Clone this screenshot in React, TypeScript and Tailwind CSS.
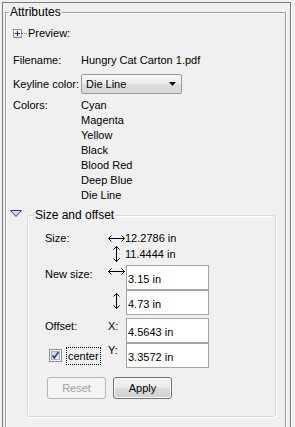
const colors = ["Cyan", "Magenta", "Yellow", "Black", "Blood Red", "Deep Blue", "Die Line"]

function HArrow() {
  return (
    <svg width="17" height="7" viewBox="0 0 17 7" className="block">
      <path d="M0.5 3.5H16.5M3.5 0.5L0.5 3.5L3.5 6.5M13.5 0.5L16.5 3.5L13.5 6.5" stroke="#000" fill="none" strokeWidth="1" />
    </svg>
  )
}

function VArrow() {
  return (
    <svg width="7" height="16" viewBox="0 0 7 16" className="block">
      <path d="M3.5 0.5V15.5M0.5 3.5L3.5 0.5L6.5 3.5M0.5 12.5L3.5 15.5L6.5 12.5" stroke="#000" fill="none" strokeWidth="1" />
    </svg>
  )
}

function TextBox({ value }: { value: string }) {
  return (
    <div className="w-[83px] h-[25px] bg-white border border-[#a5a5a5] pl-[1px] pt-[6px] leading-[14px]">
      {value}
    </div>
  )
}

export default function App() {
  return (
    <div className="w-[295px] h-[427px] overflow-hidden bg-[#f0f0f0] text-[11px] leading-[14px] text-black font-['Liberation_Sans',Arial,sans-serif]">
      <div className="ml-[2px] mt-[2px] w-[289px] h-[460px] border border-[#7c7c7c] shadow-[1px_0_0_#fff]">
        {/* Attributes group */}
        <div className="relative ml-[2px] mt-[9px] w-[281px] h-[440px] border border-[#a0a0a0] shadow-[inset_1px_1px_0_#fff,1px_1px_0_#fff]">
          <span className="absolute left-[3px] -top-[8px] px-[1px] bg-[#f0f0f0] text-[12px] leading-[14px]">Attributes</span>

          <div className="pl-[7px]">
            <div className="mt-[13px] h-[14px] flex items-center">
              <svg width="9" height="9" viewBox="0 0 9 9" className="block">
                <defs>
                  <linearGradient id="pb" x1="0" y1="0" x2="0" y2="1">
                    <stop offset="0" stopColor="#ffffff" />
                    <stop offset="1" stopColor="#dcdcdc" />
                  </linearGradient>
                </defs>
                <rect x="0.5" y="0.5" width="8" height="8" fill="url(#pb)" stroke="#919191" />
                <path d="M2 4.5H7M4.5 2V7" stroke="#1c2c6c" strokeWidth="1" />
              </svg>
              <svg width="6" height="1" viewBox="0 0 6 1" className="block">
                <path d="M0 0.5H6" stroke="#8a8a8a" strokeDasharray="1 1" />
              </svg>
              <span>Preview:</span>
            </div>

            <div className="mt-[13px] h-[14px] flex items-center">
              <span className="w-[68px]">Filename:</span>
              <span>Hungry Cat Carton 1.pdf</span>
            </div>

            <div className="mt-[7px] h-[20px] flex items-center">
              <span className="w-[68px]">Keyline color:</span>
              <div className="w-[101px] h-[20px] flex items-center justify-between rounded-[2px] border border-[#9a9a9a] bg-[linear-gradient(#f6f6f6,#ececec_50%,#e0e0e0_50%,#d6d6d6)] pl-[4px] pr-[5px]">
                <span>Die Line</span>
                <svg width="7" height="4" viewBox="0 0 7 4" className="block">
                  <path d="M0 0H7L3.5 4Z" fill="#000" />
                </svg>
              </div>
            </div>

            <div className="mt-[4px] flex">
              <span className="w-[68px] h-[15px] leading-[15px]">Colors:</span>
              <div className="flex flex-col">
                {colors.map((c) => (
                  <span key={c} className="h-[15px] leading-[15px]">
                    {c}
                  </span>
                ))}
              </div>
            </div>
          </div>

          {/* Size and offset */}
          <div className="mt-[7px] pl-[4px] flex items-start">
            <svg width="12" height="7" viewBox="0 0 12 7" className="block">
              <path d="M0.5 0.5H11.5L6 6.5Z" fill="#cfd0ee" stroke="#3b3f6a" strokeWidth="1" strokeLinejoin="round" />
            </svg>
            <div className="relative ml-[5px] mt-[5px] w-[249px] h-[202px] rounded-[3px] border border-[#d3dbe2] shadow-[inset_1px_1px_0_#fff,1px_1px_0_#fff]">
              <span className="absolute left-[6px] -top-[8px] px-[1px] bg-[#f0f0f0] text-[12px] leading-[14px]">Size and offset</span>

              <div className="pl-[17px] pt-[14px]">
                <div className="flex h-[16px] items-center">
                  <span className="w-[63px]">Size:</span>
                  <span className="w-[17px]">
                    <HArrow />
                  </span>
                  <span>12.2786 in</span>
                </div>
                <div className="flex h-[16px] items-center">
                  <span className="w-[63px]" />
                  <span className="w-[17px] pl-[5px]">
                    <VArrow />
                  </span>
                  <span>11.4444 in</span>
                </div>

                <div className="mt-[3px] flex h-[25px] items-start">
                  <span className="w-[63px] pt-[2px]">New size:</span>
                  <span className="w-[18px] pt-[3px]">
                    <HArrow />
                  </span>
                  <TextBox value="3.15 in" />
                </div>
                <div className="flex h-[25px] items-start">
                  <span className="w-[63px]" />
                  <span className="w-[18px] pl-[5px] pt-[3px]">
                    <VArrow />
                  </span>
                  <TextBox value="4.73 in" />
                </div>

                <div className="mt-[3px] flex h-[25px] items-start">
                  <span className="w-[63px] pt-[1px]">Offset:</span>
                  <span className="w-[18px] pt-[1px]">X:</span>
                  <TextBox value="4.5643 in" />
                </div>
                <div className="flex h-[25px] items-start">
                  <div className="w-[63px] flex items-start">
                    <svg width="13" height="13" viewBox="0 0 13 13" className="block ml-[4px] mt-[6px]">
                      <defs>
                        <linearGradient id="cb" x1="0" y1="0" x2="1" y2="1">
                          <stop offset="0" stopColor="#cbcfd5" />
                          <stop offset="1" stopColor="#f6f6f6" />
                        </linearGradient>
                      </defs>
                      <rect x="0.5" y="0.5" width="12" height="12" fill="#f4f4f4" stroke="#8f8f8f" />
                      <rect x="2.5" y="2.5" width="8" height="8" fill="url(#cb)" stroke="#aeb3b9" />
                      <path d="M3.5 6.5L5.3 8.8L9.5 3" stroke="#2a3f8f" strokeWidth="1.6" fill="none" />
                    </svg>
                    <span className="ml-[4px] mt-[4px] h-[18px] px-[1px] leading-[16px] border border-dotted border-black">center</span>
                  </div>
                  <span className="w-[18px]">Y:</span>
                  <TextBox value="3.3572 in" />
                </div>

                <div className="mt-[9px] flex">
                  <button className="ml-[2px] w-[59px] h-[22px] rounded-[3px] border border-[#b5b5b5] bg-[#f4f4f4] text-[#a0a0a0] leading-[14px]">
                    Reset
                  </button>
                  <button className="ml-[7px] w-[59px] h-[22px] rounded-[3px] border border-[#707070] bg-[linear-gradient(#f2f2f2,#ebebeb_50%,#dddddd_50%,#cfcfcf)] shadow-[inset_0_0_0_1px_#fcfcfc] leading-[14px]">
                    Apply
                  </button>
                </div>
              </div>
            </div>
          </div>
        </div>
      </div>
    </div>
  )
}
